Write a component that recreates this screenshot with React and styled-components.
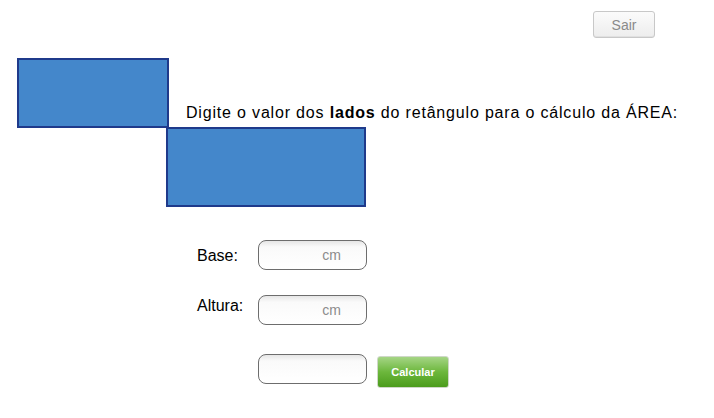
import React from "react";
import styled, { createGlobalStyle } from "styled-components";

const GlobalStyle = createGlobalStyle`
  html, body {
    margin: 0;
    padding: 0;
    background: #ffffff;
    font-family: "Liberation Sans", Arial, sans-serif;
  }
`;

const Page = styled.div`
  width: 714px;
  height: 418px;
  box-sizing: border-box;
  padding: 11px 0 0 17px;
  display: flex;
  flex-direction: column;
`;

const TopBar = styled.div`
  display: flex;
  justify-content: flex-end;
  padding-right: 59px;
`;

const ExitButton = styled.button`
  width: 62px;
  height: 27px;
  box-sizing: border-box;
  border: 1px solid #c8c8c8;
  border-radius: 3px;
  background: linear-gradient(to bottom, #fbfbfb 0%, #ededed 100%);
  box-shadow: inset 0 -1px 0 #e0e0e0;
  color: #8a8a8a;
  font-family: "Liberation Sans", Arial, sans-serif;
  font-size: 14px;
  padding: 0;
  cursor: pointer;
`;

const Figure = styled.div`
  display: grid;
  grid-template-columns: 151px auto;
  margin-top: 20px;
`;

const Rect = styled.div`
  width: ${(p) => p.$w}px;
  height: ${(p) => p.$h}px;
  box-sizing: border-box;
  background: #4487cb;
  border: 2px solid #1f3a8b;
`;

const LowerRect = styled(Rect)`
  grid-column: 2;
  margin-left: -2px;
  margin-top: -1px;
`;

const Prompt = styled.p`
  margin: 0 0 6px 18px;
  align-self: end;
  font-size: 16px;
  letter-spacing: 0.82px;
  color: #000;
  white-space: nowrap;

  strong {
    font-weight: bold;
  }
`;

const Form = styled.div`
  display: grid;
  grid-template-columns: 61px 109px auto;
  align-items: center;
  row-gap: 25px;
  margin: 33px 0 0 180px;
`;

const Label = styled.span`
  font-size: 16px;
  color: #000;
  margin-top: ${(p) => p.$shift || 0}px;
`;

const Field = styled.div`
  height: 30px;
  box-sizing: border-box;
  border: 1px solid #6d6d6d;
  border-radius: 8px;
  background: linear-gradient(to bottom, #e6e6e6 0px, #fafafa 6px, #ffffff 100%);
  display: flex;
  align-items: center;
  justify-content: flex-end;
  padding-right: 25px;
  color: #8c8c8c;
  font-size: 14px;
`;

const CalcButton = styled.button`
  margin-left: 10px;
  margin-top: 6px;
  width: 72px;
  height: 32px;
  box-sizing: border-box;
  border: 1px solid #cfd8c8;
  border-radius: 3px;
  background: linear-gradient(to bottom, #a5d585 0%, #6cb73c 50%, #4b9c1c 100%);
  color: #ffffff;
  font-family: "Liberation Sans", Arial, sans-serif;
  font-weight: bold;
  font-size: 11px;
  padding: 0;
  cursor: pointer;
`;

const Spacer = styled.span``;

export default function App() {
  return (
    <>
      <GlobalStyle />
      <Page>
        <TopBar>
          <ExitButton>Sair</ExitButton>
        </TopBar>
        <Figure>
          <Rect $w={152} $h={70} />
          <Prompt>
            Digite o valor dos <strong>lados</strong> do retângulo para o cálculo da ÁREA:
          </Prompt>
          <LowerRect $w={200} $h={80} />
        </Figure>
        <Form>
          <Label $shift={1}>Base:</Label>
          <Field>cm</Field>
          <Spacer />
          <Label $shift={-9}>Altura:</Label>
          <Field>cm</Field>
          <Spacer />
          <Spacer />
          <Field />
          <CalcButton>Calcular</CalcButton>
        </Form>
      </Page>
    </>
  );
}
